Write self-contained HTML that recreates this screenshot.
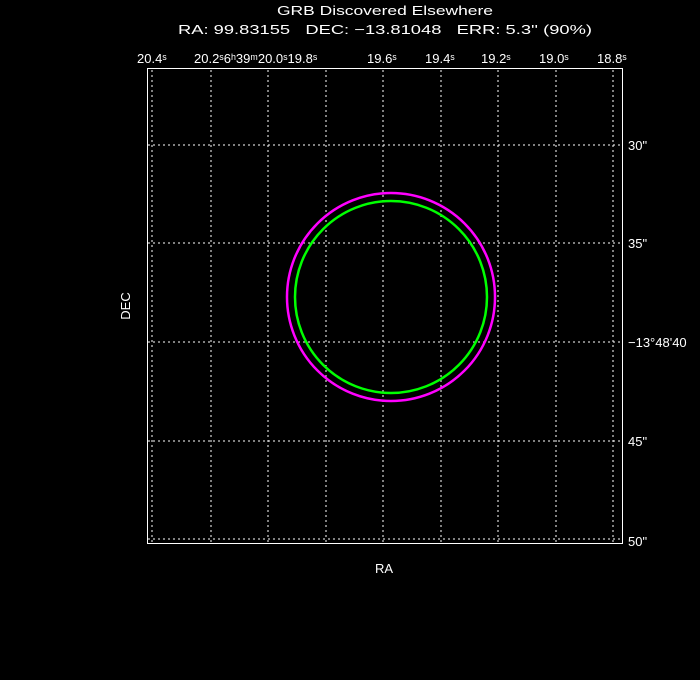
<!DOCTYPE html>
<html><head><style>
html,body{margin:0;padding:0;background:#000;width:700px;height:680px;overflow:hidden}
svg{display:block}
text{fill:#fff;font-family:"Liberation Sans",sans-serif;font-size:13px;white-space:pre}
</style></head><body>
<svg width="700" height="680" xmlns="http://www.w3.org/2000/svg">
<text x="385" y="15" text-anchor="middle" font-size="15" textLength="216" lengthAdjust="spacingAndGlyphs">GRB Discovered Elsewhere</text>
<text x="385" y="34" text-anchor="middle" font-size="15" textLength="414" lengthAdjust="spacingAndGlyphs">RA: 99.83155   DEC: −13.81048   ERR: 5.3'' (90%)</text>
<g stroke="#fff" stroke-width="1" stroke-dasharray="2,3" fill="none">
<line x1="152" y1="70" x2="152" y2="542"/><line x1="211" y1="70" x2="211" y2="542"/>
<line x1="268" y1="70" x2="268" y2="542"/><line x1="326" y1="70" x2="326" y2="542"/>
<line x1="383" y1="70" x2="383" y2="542"/><line x1="441" y1="70" x2="441" y2="542"/>
<line x1="498" y1="70" x2="498" y2="542"/><line x1="556" y1="70" x2="556" y2="542"/>
<line x1="613" y1="70" x2="613" y2="542"/>
<line x1="148" y1="145" x2="621" y2="145"/><line x1="148" y1="243" x2="621" y2="243"/>
<line x1="148" y1="342" x2="621" y2="342"/><line x1="148" y1="441" x2="621" y2="441"/>
<line x1="148" y1="539" x2="621" y2="539"/>
</g>
<rect x="147.5" y="68.5" width="475" height="475" stroke="#fff" fill="none"/>
<circle cx="391" cy="297" r="104" stroke="#ff00ff" stroke-width="2.5" fill="none"/>
<circle cx="391" cy="297" r="96" stroke="#00ff00" stroke-width="2.5" fill="none"/>
<g font-size="12">
<text x="137" y="63">20.4ˢ</text>
<text x="194" y="63">20.2ˢ6ʰ39ᵐ20.0ˢ19.8ˢ</text>
<text x="367" y="63">19.6ˢ</text>
<text x="425" y="63">19.4ˢ</text>
<text x="481" y="63">19.2ˢ</text>
<text x="539" y="63">19.0ˢ</text>
<text x="597" y="63">18.8ˢ</text>
<text x="628" y="150">30"</text>
<text x="628" y="248">35"</text>
<text x="628" y="347">−13°48'40</text>
<text x="628" y="446">45"</text>
<text x="628" y="546">50"</text>
</g>
<text x="384" y="573" text-anchor="middle" font-size="14">RA</text>
<text transform="translate(130,306) rotate(-90)" text-anchor="middle" font-size="14">DEC</text>
</svg>
</body></html>
